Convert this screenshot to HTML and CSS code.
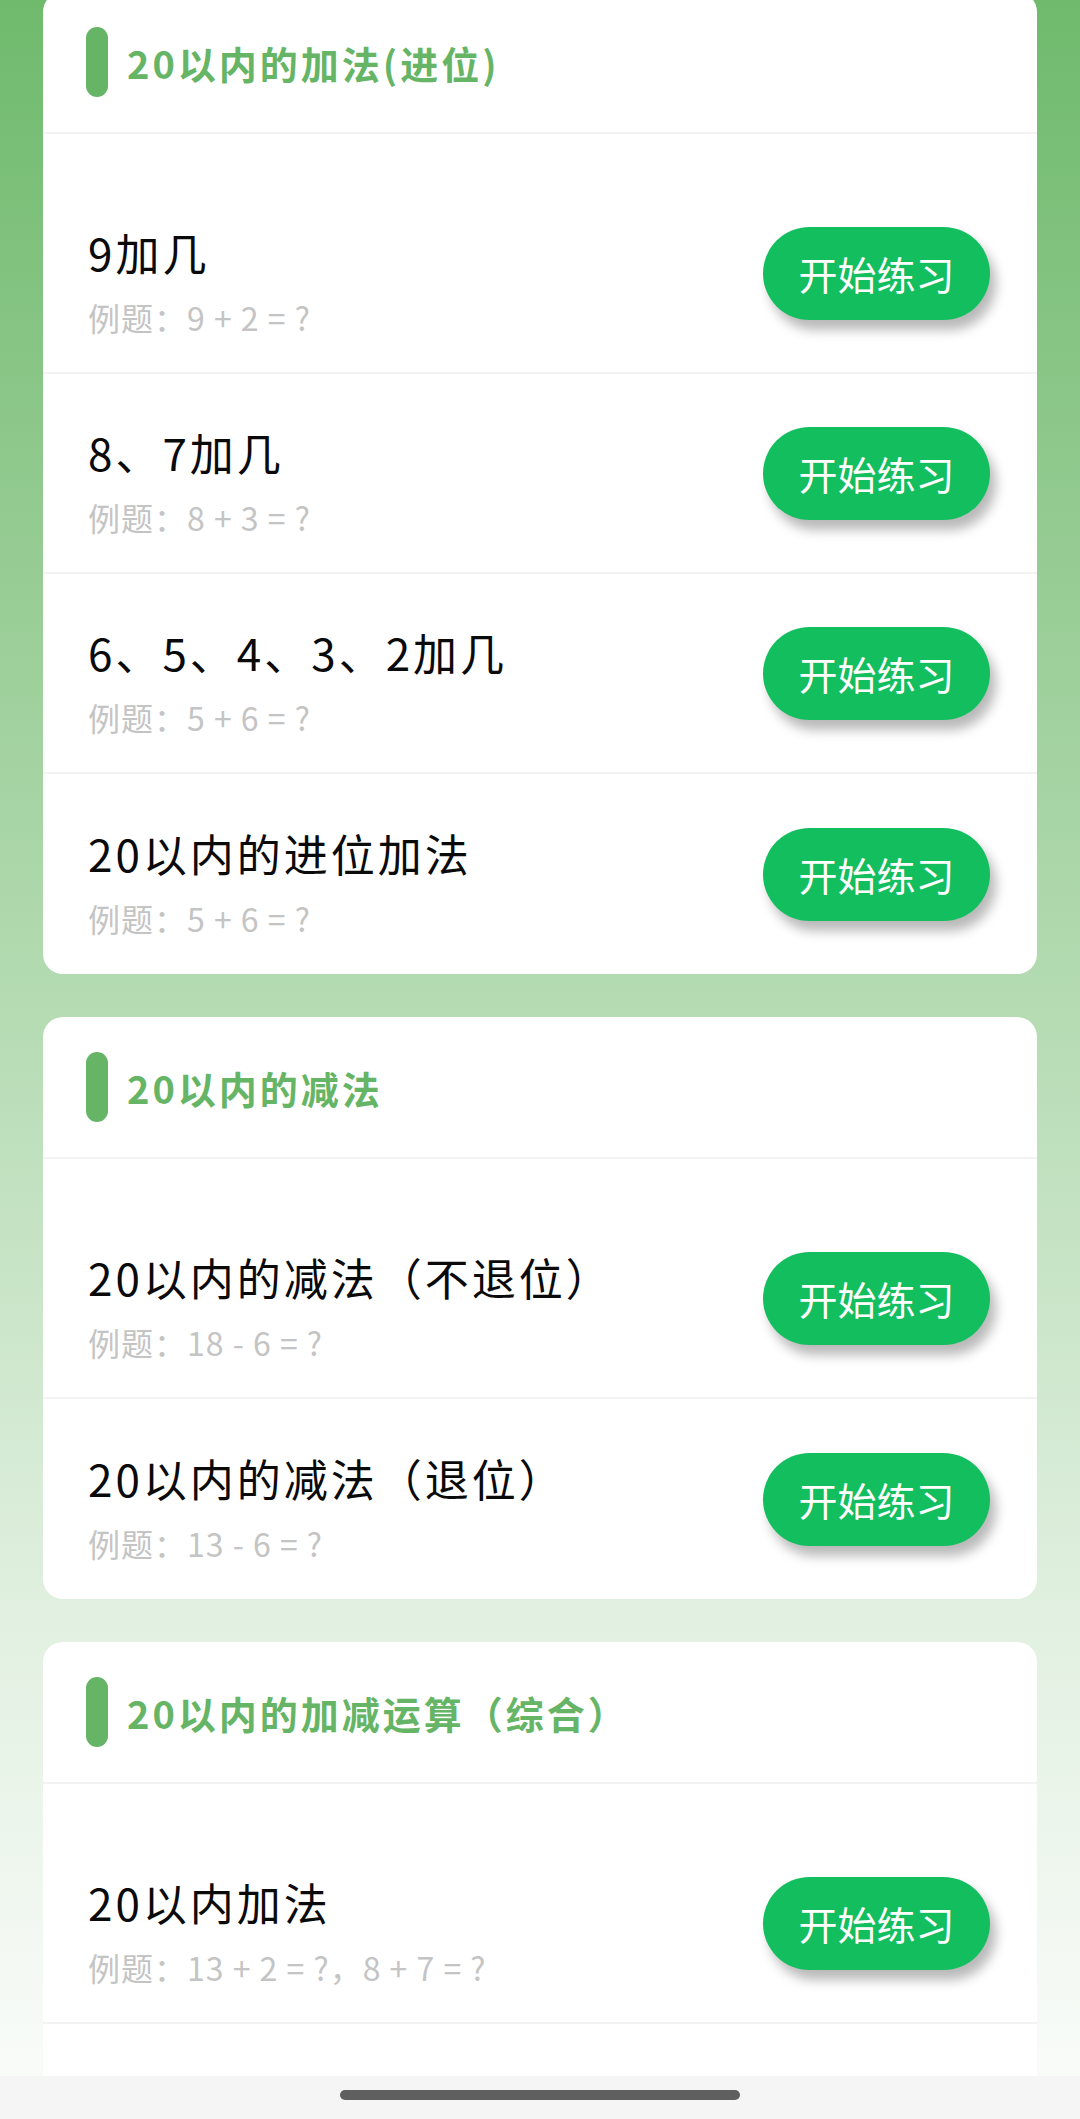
FILE: index.html
```html
<!DOCTYPE html>
<html lang="zh-CN">
<head>
    <meta charset="UTF-8">
    <meta name="viewport" content="width=device-width, initial-scale=1.0">
    <title>20以内加减法练习</title>
    <link rel="stylesheet" href="styles.css">
</head>
<body>
    <div class="page">
        <!-- 进位加法 -->
        <div class="card">
            <div class="card-head">
                <span class="bar"></span>
                <h2>20以内的加法(进位)</h2>
            </div>
            <div class="lesson">
                <div class="lesson-text">
                    <div class="lesson-title">9加几</div>
                    <div class="lesson-sample">例题：9 + 2 = ?</div>
                </div>
                <button class="start-btn">开始练习</button>
            </div>
            <div class="lesson">
                <div class="lesson-text">
                    <div class="lesson-title">8、7加几</div>
                    <div class="lesson-sample">例题：8 + 3 = ?</div>
                </div>
                <button class="start-btn">开始练习</button>
            </div>
            <div class="lesson">
                <div class="lesson-text">
                    <div class="lesson-title">6、5、4、3、2加几</div>
                    <div class="lesson-sample">例题：5 + 6 = ?</div>
                </div>
                <button class="start-btn">开始练习</button>
            </div>
            <div class="lesson">
                <div class="lesson-text">
                    <div class="lesson-title">20以内的进位加法</div>
                    <div class="lesson-sample">例题：5 + 6 = ?</div>
                </div>
                <button class="start-btn">开始练习</button>
            </div>
        </div>

        <!-- 减法 -->
        <div class="card">
            <div class="card-head">
                <span class="bar"></span>
                <h2>20以内的减法</h2>
            </div>
            <div class="lesson">
                <div class="lesson-text">
                    <div class="lesson-title">20以内的减法（不退位）</div>
                    <div class="lesson-sample">例题：18 - 6 = ?</div>
                </div>
                <button class="start-btn">开始练习</button>
            </div>
            <div class="lesson">
                <div class="lesson-text">
                    <div class="lesson-title">20以内的减法（退位）</div>
                    <div class="lesson-sample">例题：13 - 6 = ?</div>
                </div>
                <button class="start-btn">开始练习</button>
            </div>
        </div>

        <!-- 综合 -->
        <div class="card">
            <div class="card-head">
                <span class="bar"></span>
                <h2>20以内的加减运算（综合）</h2>
            </div>
            <div class="lesson">
                <div class="lesson-text">
                    <div class="lesson-title">20以内加法</div>
                    <div class="lesson-sample">例题：13 + 2 = ?，8 + 7 = ?</div>
                </div>
                <button class="start-btn">开始练习</button>
            </div>
            <div class="lesson">
                <div class="lesson-text">
                    <div class="lesson-title">20以内减法</div>
                    <div class="lesson-sample">例题：13 - 2 = ?，15 - 7 = ?</div>
                </div>
                <button class="start-btn">开始练习</button>
            </div>
        </div>
    </div>

    <div class="nav-bar">
        <span class="home-pill"></span>
    </div>
</body>
</html>
```

FILE: styles.css
```css
* {
    margin: 0;
    padding: 0;
    box-sizing: border-box;
    font-family: "Noto Sans CJK SC", "Noto Sans", sans-serif;
}

html, body {
    height: 2119px;
    overflow: hidden;
}

body {
    background: linear-gradient(180deg, #6fba6d 0%, #94cb91 25%, #b4dbb2 47%, #e1f0e0 76%, #f8fbf8 97%);
}

.page {
    padding: 0 43px;
}

.card {
    background: #ffffff;
    border-radius: 20px;
    margin-bottom: 43px;
    overflow: hidden;
}

.card:first-child {
    margin-top: -8px;
}

.card-head {
    display: flex;
    align-items: center;
    height: 142px;
    padding-left: 43px;
    border-bottom: 2px solid #f3f3f3;
}

.bar {
    width: 22px;
    height: 70px;
    border-radius: 11px;
    background: #66b566;
    margin-right: 19px;
}

.card-head h2 {
    color: #66b566;
    font-size: 38px;
    font-weight: bold;
    letter-spacing: 3px;
}

.lesson {
    display: flex;
    align-items: center;
    justify-content: space-between;
    height: 200px;
    padding: 0 47px 0 45px;
    border-bottom: 2px solid #f3f3f3;
}

.card-head + .lesson {
    height: 240px;
    padding-top: 40px;
}

.lesson:last-child {
    border-bottom: none;
}

.lesson-text {
    padding-top: 16px;
}

.lesson-title {
    color: #0a0a0a;
    font-size: 44px;
    line-height: 56px;
    letter-spacing: 3px;
}

.lesson-sample {
    color: #c4c4c4;
    font-size: 32px;
    line-height: 42px;
    margin-top: 16px;
    letter-spacing: 1px;
}

.start-btn {
    width: 227px;
    height: 93px;
    border: none;
    border-radius: 47px;
    background: #13be5f;
    color: #ffffff;
    font-size: 39px;
    box-shadow: 6px 10px 12px rgba(0, 0, 0, 0.28);
    cursor: pointer;
}

.nav-bar {
    position: fixed;
    left: 0;
    right: 0;
    bottom: 0;
    height: 43px;
    background: #f5f5f5;
    display: flex;
    justify-content: center;
    padding-top: 14px;
}

.home-pill {
    width: 400px;
    height: 10px;
    border-radius: 5px;
    background: #5f5f5f;
}
```
